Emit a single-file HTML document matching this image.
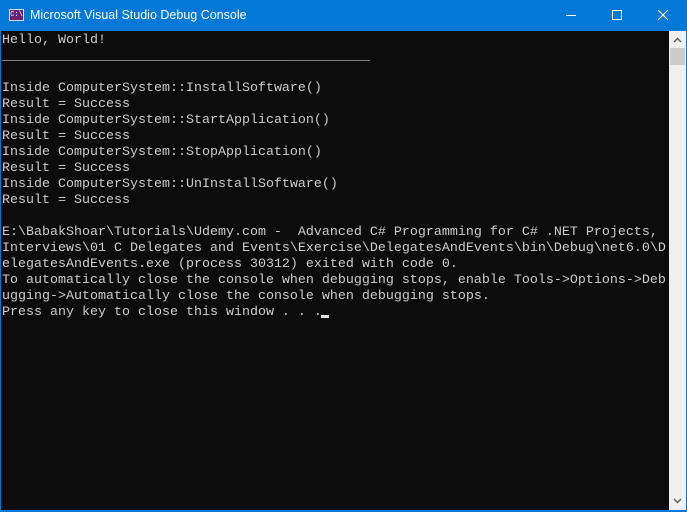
<!DOCTYPE html>
<html><head><style>
html,body{margin:0;padding:0;width:687px;height:512px;overflow:hidden;background:#0c0c0c;}
.title{position:absolute;left:0;top:0;width:687px;height:31px;background:#0078d7;color:#fff;font-family:"Liberation Sans",sans-serif;font-size:12.5px;}
.title .t{position:absolute;left:30px;top:8px;}
.icon{position:absolute;left:9px;top:9px;width:15px;height:12px;background:#68217a;border:1px solid #ddd;box-sizing:border-box;color:#fff;font-size:7px;line-height:10px;text-align:center;font-family:"Liberation Mono",monospace;}
.con{position:absolute;left:2px;top:33px;font-family:"Liberation Mono",monospace;font-size:13.33px;line-height:16px;color:#cccccc;white-space:pre;margin:0;}
.sb{position:absolute;left:669px;top:31px;width:17px;height:479px;background:#f0f0f0;}
.thumb{position:absolute;left:670px;top:48px;width:15px;height:17px;background:#cdcdcd;}
.cur{position:absolute;left:321px;top:315px;width:8px;height:3px;background:#e0e0e0;}
.bl{position:absolute;left:0;top:510px;width:687px;height:2px;background:#0078d7;}
.lb{position:absolute;left:0;top:31px;width:1px;height:481px;background:#0078d7;}
.rb{position:absolute;left:686px;top:31px;width:1px;height:481px;background:#0078d7;}
</style></head><body>
<div class="title"><div class="icon">C:\</div><span class="t">Microsoft Visual Studio Debug Console</span>
<svg style="position:absolute;left:560px;top:9px" width="120" height="14">
<line x1="6" y1="6.5" x2="16" y2="6.5" stroke="#fff" stroke-width="1"/>
<rect x="52.5" y="1.5" width="9" height="9" fill="none" stroke="#fff"/>
<path d="M98 1 L108 11 M108 1 L98 11" stroke="#fff" stroke-width="1.2"/>
</svg></div>
<pre class="con">Hello, World!
______________________________________________

Inside ComputerSystem::InstallSoftware()
Result = Success
Inside ComputerSystem::StartApplication()
Result = Success
Inside ComputerSystem::StopApplication()
Result = Success
Inside ComputerSystem::UnInstallSoftware()
Result = Success

E:\BabakShoar\Tutorials\Udemy.com -  Advanced C# Programming for C# .NET Projects,
Interviews\01 C Delegates and Events\Exercise\DelegatesAndEvents\bin\Debug\net6.0\D
elegatesAndEvents.exe (process 30312) exited with code 0.
To automatically close the console when debugging stops, enable Tools-&gt;Options-&gt;Deb
ugging-&gt;Automatically close the console when debugging stops.
Press any key to close this window . . .</pre>
<div class="cur"></div>
<div class="sb"></div><div class="thumb"></div>
<svg style="position:absolute;left:669px;top:31px" width="17" height="479">
<path d="M5 11 L8.5 7.5 L12 11" stroke="#606060" stroke-width="1.5" fill="none"/>
<path d="M5 468 L8.5 471.5 L12 468" stroke="#606060" stroke-width="1.5" fill="none"/>
</svg>
<div class="bl"></div><div class="lb"></div><div class="rb"></div>
</body></html>
